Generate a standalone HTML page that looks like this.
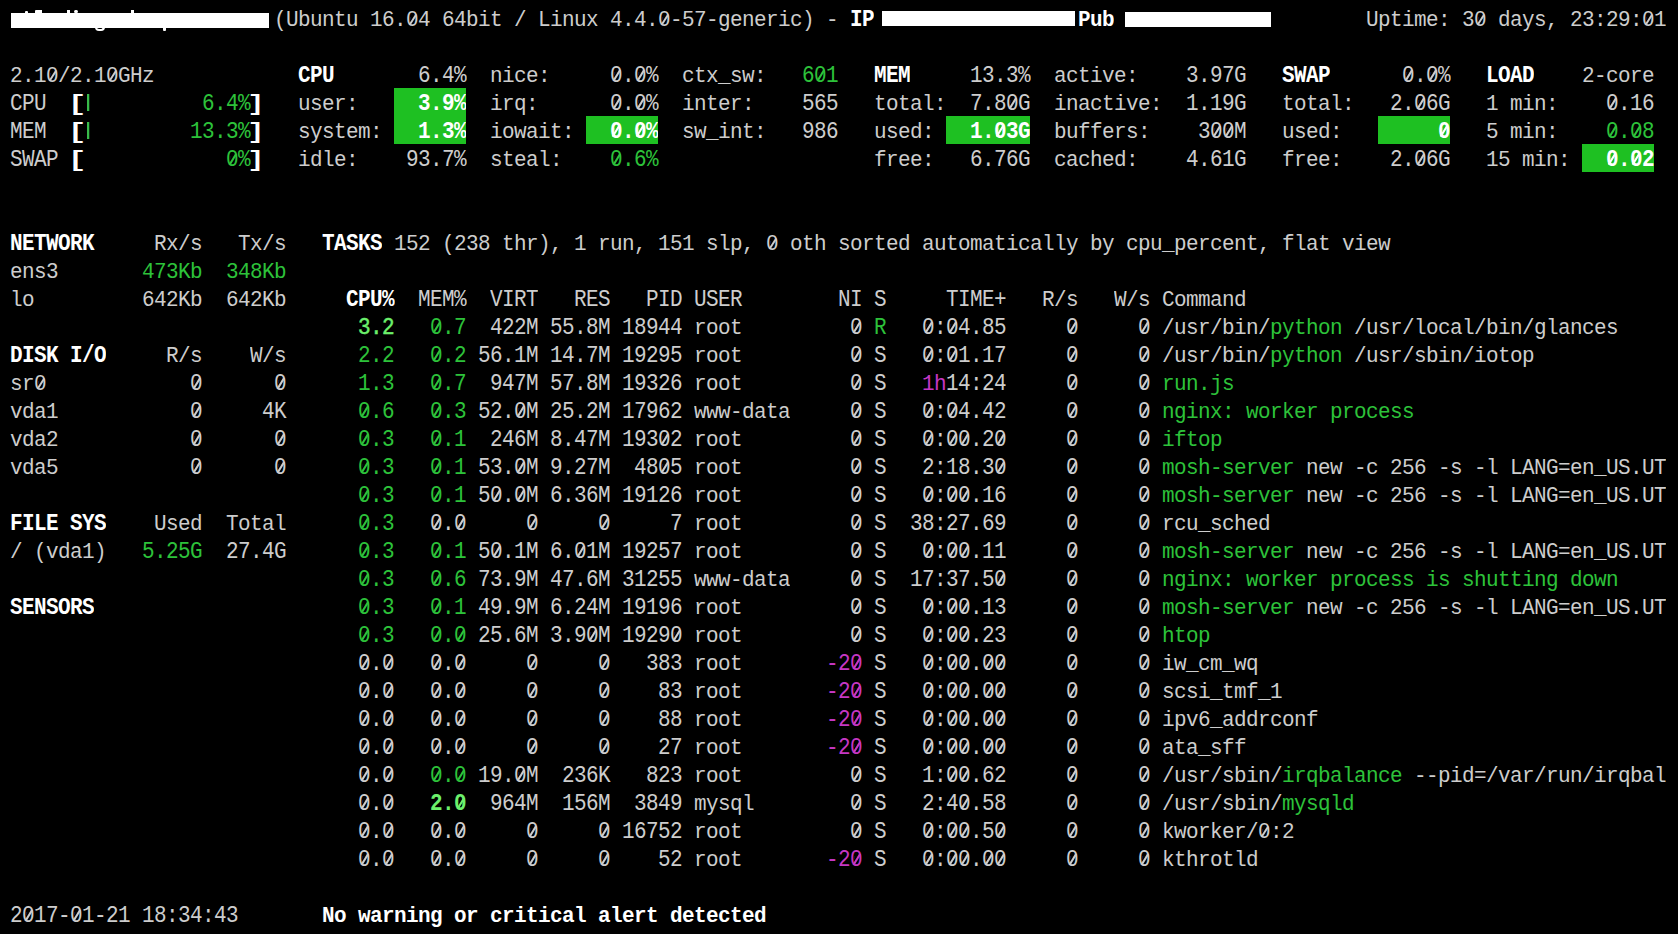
<!DOCTYPE html>
<html><head><meta charset="utf-8"><style>
html,body{margin:0;padding:0;background:#000;}
body{width:1678px;height:934px;position:relative;overflow:hidden;}
span{position:absolute;white-space:pre;font-family:"Liberation Mono",monospace;font-size:21px;letter-spacing:-0.6021px;line-height:28px;height:28px;color:#cdcdcd;transform:scaleY(1.05);transform-origin:0 19.58px;}
.b{color:#fff;font-weight:bold;}
.wl,.wr{color:#fff;font-weight:bold;}
.wl{transform:translateX(1.1px) scale(1.49,1.05);transform-origin:6.91px 19.58px;}
.wr{transform:translateX(-0.5px) scale(1.375,1.05);transform-origin:5.69px 19.58px;}
.bar{position:absolute;width:2px;height:17px;background:#38bb4a;box-shadow:0.6px 0 0 rgba(56,187,74,0.45);}
.g{color:#2dc23a;}
.G{color:#6cf06c;font-weight:bold;}
.H{color:#6cf06c;-webkit-text-stroke:0.4px #6cf06c;}
.d{color:#2dc23a;}
.m{color:#c637c4;}
.x{color:#fff;font-weight:bold;}
.bx{position:absolute;height:28px;background:#1ec022;}
.rd{position:absolute;background:#fff;}
i{font-style:normal;position:relative;}
i::before{content:"";position:absolute;left:4.5px;top:8.2px;width:3.5px;height:4.4px;background:#000;}
.x i::before{background:#1ec022;}
i::after{content:"";position:absolute;left:5.5px;top:4.8px;width:1.6px;height:11.6px;background:currentColor;transform:rotate(34deg);}
.x i::after{width:2.2px;left:5.199999999999999px;}
</style></head><body>
<div class="bx" style="left:394px;top:88px;width:72px"></div>
<div class="bx" style="left:394px;top:116px;width:72px"></div>
<div class="bx" style="left:586px;top:116px;width:72px"></div>
<div class="bx" style="left:946px;top:116px;width:84px"></div>
<div class="bx" style="left:1378px;top:116px;width:72px"></div>
<div class="bx" style="left:1582px;top:144px;width:72px"></div>
<span class="n" style="left:274px;top:6.8px">(Ubuntu 16.<i>0</i>4 64bit / Linux 4.4.<i>0</i>-57-generic) - </span>
<span class="b" style="left:850px;top:6.8px;transform:scaleY(1.1)">IP</span>
<span class="b" style="left:1078px;top:6.8px">Pub</span>
<span class="n" style="left:1366px;top:6.8px">Uptime: 3<i>0</i> days, 23:29:<i>0</i>1</span>
<span class="n" style="left:10px;top:62.8px">2.1<i>0</i>/2.1<i>0</i>GHz</span>
<span class="b" style="left:298px;top:62.8px;transform:scaleY(1.1)">CPU</span>
<span class="n" style="left:418px;top:62.8px;transform:scaleY(1.1)">6.4%</span>
<span class="n" style="left:490px;top:62.8px">nice:</span>
<span class="n" style="left:610px;top:62.8px;transform:scaleY(1.1)"><i>0</i>.<i>0</i>%</span>
<span class="n" style="left:682px;top:62.8px">ctx_sw:</span>
<span class="g" style="left:802px;top:62.8px;transform:scaleY(1.1)">6<i>0</i>1</span>
<span class="b" style="left:874px;top:62.8px;transform:scaleY(1.1)">MEM</span>
<span class="n" style="left:970px;top:62.8px;transform:scaleY(1.1)">13.3%</span>
<span class="n" style="left:1054px;top:62.8px">active:</span>
<span class="n" style="left:1186px;top:62.8px;transform:scaleY(1.1)">3.97G</span>
<span class="b" style="left:1282px;top:62.8px;transform:scaleY(1.1)">SWAP</span>
<span class="n" style="left:1402px;top:62.8px;transform:scaleY(1.1)"><i>0</i>.<i>0</i>%</span>
<span class="b" style="left:1486px;top:62.8px;transform:scaleY(1.1)">LOAD</span>
<span class="n" style="left:1582px;top:62.8px">2-core</span>
<span class="n" style="left:10px;top:90.8px;transform:scaleY(1.1)">CPU</span>
<span class="wl" style="left:70px;top:90.8px">[</span>
<span class="g" style="left:202px;top:90.8px;transform:scaleY(1.1)">6.4%</span>
<span class="wr" style="left:250px;top:90.8px">]</span>
<span class="n" style="left:298px;top:90.8px">user:</span>
<span class="x" style="left:418px;top:90.8px;width:48px;overflow:hidden;transform:scaleY(1.1)">3.9%</span>
<span class="n" style="left:490px;top:90.8px">irq:</span>
<span class="n" style="left:610px;top:90.8px;transform:scaleY(1.1)"><i>0</i>.<i>0</i>%</span>
<span class="n" style="left:682px;top:90.8px">inter:</span>
<span class="n" style="left:802px;top:90.8px;transform:scaleY(1.1)">565</span>
<span class="n" style="left:874px;top:90.8px">total:</span>
<span class="n" style="left:970px;top:90.8px;transform:scaleY(1.1)">7.8<i>0</i>G</span>
<span class="n" style="left:1054px;top:90.8px">inactive:</span>
<span class="n" style="left:1186px;top:90.8px;transform:scaleY(1.1)">1.19G</span>
<span class="n" style="left:1282px;top:90.8px">total:</span>
<span class="n" style="left:1390px;top:90.8px;transform:scaleY(1.1)">2.<i>0</i>6G</span>
<span class="n" style="left:1486px;top:90.8px">1 min:</span>
<span class="n" style="left:1606px;top:90.8px;transform:scaleY(1.1)"><i>0</i>.16</span>
<span class="n" style="left:10px;top:118.8px;transform:scaleY(1.1)">MEM</span>
<span class="wl" style="left:70px;top:118.8px">[</span>
<span class="g" style="left:190px;top:118.8px;transform:scaleY(1.1)">13.3%</span>
<span class="wr" style="left:250px;top:118.8px">]</span>
<span class="n" style="left:298px;top:118.8px">system:</span>
<span class="x" style="left:418px;top:118.8px;width:48px;overflow:hidden;transform:scaleY(1.1)">1.3%</span>
<span class="n" style="left:490px;top:118.8px">iowait:</span>
<span class="x" style="left:610px;top:118.8px;width:48px;overflow:hidden;transform:scaleY(1.1)"><i>0</i>.<i>0</i>%</span>
<span class="n" style="left:682px;top:118.8px">sw_int:</span>
<span class="n" style="left:802px;top:118.8px;transform:scaleY(1.1)">986</span>
<span class="n" style="left:874px;top:118.8px">used:</span>
<span class="x" style="left:970px;top:118.8px;width:60px;overflow:hidden;transform:scaleY(1.1)">1.<i>0</i>3G</span>
<span class="n" style="left:1054px;top:118.8px">buffers:</span>
<span class="n" style="left:1198px;top:118.8px;transform:scaleY(1.1)">3<i>0</i><i>0</i>M</span>
<span class="n" style="left:1282px;top:118.8px">used:</span>
<span class="x" style="left:1438px;top:118.8px;width:12px;overflow:hidden;transform:scaleY(1.1)"><i>0</i></span>
<span class="n" style="left:1486px;top:118.8px">5 min:</span>
<span class="g" style="left:1606px;top:118.8px;transform:scaleY(1.1)"><i>0</i>.<i>0</i>8</span>
<span class="n" style="left:10px;top:146.8px;transform:scaleY(1.1)">SWAP</span>
<span class="wl" style="left:70px;top:146.8px">[</span>
<span class="g" style="left:226px;top:146.8px;transform:scaleY(1.1)"><i>0</i>%</span>
<span class="wr" style="left:250px;top:146.8px">]</span>
<span class="n" style="left:298px;top:146.8px">idle:</span>
<span class="n" style="left:406px;top:146.8px;transform:scaleY(1.1)">93.7%</span>
<span class="n" style="left:490px;top:146.8px">steal:</span>
<span class="g" style="left:610px;top:146.8px;transform:scaleY(1.1)"><i>0</i>.6%</span>
<span class="n" style="left:874px;top:146.8px">free:</span>
<span class="n" style="left:970px;top:146.8px;transform:scaleY(1.1)">6.76G</span>
<span class="n" style="left:1054px;top:146.8px">cached:</span>
<span class="n" style="left:1186px;top:146.8px;transform:scaleY(1.1)">4.61G</span>
<span class="n" style="left:1282px;top:146.8px">free:</span>
<span class="n" style="left:1390px;top:146.8px;transform:scaleY(1.1)">2.<i>0</i>6G</span>
<span class="n" style="left:1486px;top:146.8px">15 min:</span>
<span class="x" style="left:1606px;top:146.8px;width:48px;overflow:hidden;transform:scaleY(1.1)"><i>0</i>.<i>0</i>2</span>
<span class="b" style="left:10px;top:230.8px;transform:scaleY(1.1)">NETWORK</span>
<span class="n" style="left:154px;top:230.8px">Rx/s</span>
<span class="n" style="left:238px;top:230.8px">Tx/s</span>
<span class="b" style="left:322px;top:230.8px;transform:scaleY(1.1)">TASKS</span>
<span class="n" style="left:394px;top:230.8px">152 (238 thr), 1 run, 151 slp, <i>0</i> oth sorted automatically by cpu_percent, flat view</span>
<span class="n" style="left:10px;top:258.8px">ens3</span>
<span class="g" style="left:142px;top:258.8px">473Kb</span>
<span class="g" style="left:226px;top:258.8px">348Kb</span>
<span class="n" style="left:10px;top:286.8px">lo</span>
<span class="n" style="left:142px;top:286.8px">642Kb</span>
<span class="n" style="left:226px;top:286.8px">642Kb</span>
<span class="b" style="left:346px;top:286.8px;transform:scaleY(1.1)">CPU%</span>
<span class="n" style="left:418px;top:286.8px;transform:scaleY(1.1)">MEM%</span>
<span class="n" style="left:490px;top:286.8px;transform:scaleY(1.1)">VIRT</span>
<span class="n" style="left:574px;top:286.8px;transform:scaleY(1.1)">RES</span>
<span class="n" style="left:646px;top:286.8px;transform:scaleY(1.1)">PID</span>
<span class="n" style="left:694px;top:286.8px;transform:scaleY(1.1)">USER</span>
<span class="n" style="left:838px;top:286.8px;transform:scaleY(1.1)">NI</span>
<span class="n" style="left:874px;top:286.8px;transform:scaleY(1.1)">S</span>
<span class="n" style="left:946px;top:286.8px;transform:scaleY(1.1)">TIME+</span>
<span class="n" style="left:1042px;top:286.8px">R/s</span>
<span class="n" style="left:1114px;top:286.8px">W/s</span>
<span class="n" style="left:1162px;top:286.8px">Command</span>
<span class="H" style="left:358px;top:314.8px;transform:scaleY(1.1)">3.2</span>
<span class="g" style="left:430px;top:314.8px;transform:scaleY(1.1)"><i>0</i>.7</span>
<span class="n" style="left:490px;top:314.8px;transform:scaleY(1.1)">422M</span>
<span class="n" style="left:550px;top:314.8px;transform:scaleY(1.1)">55.8M</span>
<span class="n" style="left:622px;top:314.8px;transform:scaleY(1.1)">18944</span>
<span class="n" style="left:694px;top:314.8px">root</span>
<span class="n" style="left:850px;top:314.8px;transform:scaleY(1.1)"><i>0</i></span>
<span class="g" style="left:874px;top:314.8px;transform:scaleY(1.1)">R</span>
<span class="n" style="left:922px;top:314.8px;transform:scaleY(1.1)"><i>0</i>:<i>0</i>4.85</span>
<span class="n" style="left:1066px;top:314.8px;transform:scaleY(1.1)"><i>0</i></span>
<span class="n" style="left:1138px;top:314.8px;transform:scaleY(1.1)"><i>0</i></span>
<span class="n" style="left:1162px;top:314.8px">/usr/bin/</span>
<span class="g" style="left:1270px;top:314.8px">python</span>
<span class="n" style="left:1342px;top:314.8px"> /usr/local/bin/glances</span>
<span class="b" style="left:10px;top:342.8px;transform:scaleY(1.1)">DISK I/O</span>
<span class="n" style="left:166px;top:342.8px">R/s</span>
<span class="n" style="left:250px;top:342.8px">W/s</span>
<span class="g" style="left:358px;top:342.8px;transform:scaleY(1.1)">2.2</span>
<span class="g" style="left:430px;top:342.8px;transform:scaleY(1.1)"><i>0</i>.2</span>
<span class="n" style="left:478px;top:342.8px;transform:scaleY(1.1)">56.1M</span>
<span class="n" style="left:550px;top:342.8px;transform:scaleY(1.1)">14.7M</span>
<span class="n" style="left:622px;top:342.8px;transform:scaleY(1.1)">19295</span>
<span class="n" style="left:694px;top:342.8px">root</span>
<span class="n" style="left:850px;top:342.8px;transform:scaleY(1.1)"><i>0</i></span>
<span class="n" style="left:874px;top:342.8px;transform:scaleY(1.1)">S</span>
<span class="n" style="left:922px;top:342.8px;transform:scaleY(1.1)"><i>0</i>:<i>0</i>1.17</span>
<span class="n" style="left:1066px;top:342.8px;transform:scaleY(1.1)"><i>0</i></span>
<span class="n" style="left:1138px;top:342.8px;transform:scaleY(1.1)"><i>0</i></span>
<span class="n" style="left:1162px;top:342.8px">/usr/bin/</span>
<span class="g" style="left:1270px;top:342.8px">python</span>
<span class="n" style="left:1342px;top:342.8px"> /usr/sbin/iotop</span>
<span class="n" style="left:10px;top:370.8px">sr<i>0</i></span>
<span class="n" style="left:190px;top:370.8px;transform:scaleY(1.1)"><i>0</i></span>
<span class="n" style="left:274px;top:370.8px;transform:scaleY(1.1)"><i>0</i></span>
<span class="g" style="left:358px;top:370.8px;transform:scaleY(1.1)">1.3</span>
<span class="g" style="left:430px;top:370.8px;transform:scaleY(1.1)"><i>0</i>.7</span>
<span class="n" style="left:490px;top:370.8px;transform:scaleY(1.1)">947M</span>
<span class="n" style="left:550px;top:370.8px;transform:scaleY(1.1)">57.8M</span>
<span class="n" style="left:622px;top:370.8px;transform:scaleY(1.1)">19326</span>
<span class="n" style="left:694px;top:370.8px">root</span>
<span class="n" style="left:850px;top:370.8px;transform:scaleY(1.1)"><i>0</i></span>
<span class="n" style="left:874px;top:370.8px;transform:scaleY(1.1)">S</span>
<span class="m" style="left:922px;top:370.8px">1h</span>
<span class="n" style="left:946px;top:370.8px;transform:scaleY(1.1)">14:24</span>
<span class="n" style="left:1066px;top:370.8px;transform:scaleY(1.1)"><i>0</i></span>
<span class="n" style="left:1138px;top:370.8px;transform:scaleY(1.1)"><i>0</i></span>
<span class="g" style="left:1162px;top:370.8px">run.js</span>
<span class="n" style="left:10px;top:398.8px">vda1</span>
<span class="n" style="left:190px;top:398.8px;transform:scaleY(1.1)"><i>0</i></span>
<span class="n" style="left:262px;top:398.8px;transform:scaleY(1.1)">4K</span>
<span class="g" style="left:358px;top:398.8px;transform:scaleY(1.1)"><i>0</i>.6</span>
<span class="g" style="left:430px;top:398.8px;transform:scaleY(1.1)"><i>0</i>.3</span>
<span class="n" style="left:478px;top:398.8px;transform:scaleY(1.1)">52.<i>0</i>M</span>
<span class="n" style="left:550px;top:398.8px;transform:scaleY(1.1)">25.2M</span>
<span class="n" style="left:622px;top:398.8px;transform:scaleY(1.1)">17962</span>
<span class="n" style="left:694px;top:398.8px">www-data</span>
<span class="n" style="left:850px;top:398.8px;transform:scaleY(1.1)"><i>0</i></span>
<span class="n" style="left:874px;top:398.8px;transform:scaleY(1.1)">S</span>
<span class="n" style="left:922px;top:398.8px;transform:scaleY(1.1)"><i>0</i>:<i>0</i>4.42</span>
<span class="n" style="left:1066px;top:398.8px;transform:scaleY(1.1)"><i>0</i></span>
<span class="n" style="left:1138px;top:398.8px;transform:scaleY(1.1)"><i>0</i></span>
<span class="g" style="left:1162px;top:398.8px">nginx: worker process</span>
<span class="n" style="left:10px;top:426.8px">vda2</span>
<span class="n" style="left:190px;top:426.8px;transform:scaleY(1.1)"><i>0</i></span>
<span class="n" style="left:274px;top:426.8px;transform:scaleY(1.1)"><i>0</i></span>
<span class="g" style="left:358px;top:426.8px;transform:scaleY(1.1)"><i>0</i>.3</span>
<span class="g" style="left:430px;top:426.8px;transform:scaleY(1.1)"><i>0</i>.1</span>
<span class="n" style="left:490px;top:426.8px;transform:scaleY(1.1)">246M</span>
<span class="n" style="left:550px;top:426.8px;transform:scaleY(1.1)">8.47M</span>
<span class="n" style="left:622px;top:426.8px;transform:scaleY(1.1)">193<i>0</i>2</span>
<span class="n" style="left:694px;top:426.8px">root</span>
<span class="n" style="left:850px;top:426.8px;transform:scaleY(1.1)"><i>0</i></span>
<span class="n" style="left:874px;top:426.8px;transform:scaleY(1.1)">S</span>
<span class="n" style="left:922px;top:426.8px;transform:scaleY(1.1)"><i>0</i>:<i>0</i><i>0</i>.2<i>0</i></span>
<span class="n" style="left:1066px;top:426.8px;transform:scaleY(1.1)"><i>0</i></span>
<span class="n" style="left:1138px;top:426.8px;transform:scaleY(1.1)"><i>0</i></span>
<span class="g" style="left:1162px;top:426.8px">iftop</span>
<span class="n" style="left:10px;top:454.8px">vda5</span>
<span class="n" style="left:190px;top:454.8px;transform:scaleY(1.1)"><i>0</i></span>
<span class="n" style="left:274px;top:454.8px;transform:scaleY(1.1)"><i>0</i></span>
<span class="g" style="left:358px;top:454.8px;transform:scaleY(1.1)"><i>0</i>.3</span>
<span class="g" style="left:430px;top:454.8px;transform:scaleY(1.1)"><i>0</i>.1</span>
<span class="n" style="left:478px;top:454.8px;transform:scaleY(1.1)">53.<i>0</i>M</span>
<span class="n" style="left:550px;top:454.8px;transform:scaleY(1.1)">9.27M</span>
<span class="n" style="left:634px;top:454.8px;transform:scaleY(1.1)">48<i>0</i>5</span>
<span class="n" style="left:694px;top:454.8px">root</span>
<span class="n" style="left:850px;top:454.8px;transform:scaleY(1.1)"><i>0</i></span>
<span class="n" style="left:874px;top:454.8px;transform:scaleY(1.1)">S</span>
<span class="n" style="left:922px;top:454.8px;transform:scaleY(1.1)">2:18.3<i>0</i></span>
<span class="n" style="left:1066px;top:454.8px;transform:scaleY(1.1)"><i>0</i></span>
<span class="n" style="left:1138px;top:454.8px;transform:scaleY(1.1)"><i>0</i></span>
<span class="g" style="left:1162px;top:454.8px">mosh-server</span>
<span class="n" style="left:1294px;top:454.8px"> new -c 256 -s -l LANG=en_US.UT</span>
<span class="g" style="left:358px;top:482.8px;transform:scaleY(1.1)"><i>0</i>.3</span>
<span class="g" style="left:430px;top:482.8px;transform:scaleY(1.1)"><i>0</i>.1</span>
<span class="n" style="left:478px;top:482.8px;transform:scaleY(1.1)">5<i>0</i>.<i>0</i>M</span>
<span class="n" style="left:550px;top:482.8px;transform:scaleY(1.1)">6.36M</span>
<span class="n" style="left:622px;top:482.8px;transform:scaleY(1.1)">19126</span>
<span class="n" style="left:694px;top:482.8px">root</span>
<span class="n" style="left:850px;top:482.8px;transform:scaleY(1.1)"><i>0</i></span>
<span class="n" style="left:874px;top:482.8px;transform:scaleY(1.1)">S</span>
<span class="n" style="left:922px;top:482.8px;transform:scaleY(1.1)"><i>0</i>:<i>0</i><i>0</i>.16</span>
<span class="n" style="left:1066px;top:482.8px;transform:scaleY(1.1)"><i>0</i></span>
<span class="n" style="left:1138px;top:482.8px;transform:scaleY(1.1)"><i>0</i></span>
<span class="g" style="left:1162px;top:482.8px">mosh-server</span>
<span class="n" style="left:1294px;top:482.8px"> new -c 256 -s -l LANG=en_US.UT</span>
<span class="b" style="left:10px;top:510.8px;transform:scaleY(1.1)">FILE SYS</span>
<span class="n" style="left:154px;top:510.8px">Used</span>
<span class="n" style="left:226px;top:510.8px">Total</span>
<span class="g" style="left:358px;top:510.8px;transform:scaleY(1.1)"><i>0</i>.3</span>
<span class="n" style="left:430px;top:510.8px;transform:scaleY(1.1)"><i>0</i>.<i>0</i></span>
<span class="n" style="left:526px;top:510.8px;transform:scaleY(1.1)"><i>0</i></span>
<span class="n" style="left:598px;top:510.8px;transform:scaleY(1.1)"><i>0</i></span>
<span class="n" style="left:670px;top:510.8px;transform:scaleY(1.1)">7</span>
<span class="n" style="left:694px;top:510.8px">root</span>
<span class="n" style="left:850px;top:510.8px;transform:scaleY(1.1)"><i>0</i></span>
<span class="n" style="left:874px;top:510.8px;transform:scaleY(1.1)">S</span>
<span class="n" style="left:910px;top:510.8px;transform:scaleY(1.1)">38:27.69</span>
<span class="n" style="left:1066px;top:510.8px;transform:scaleY(1.1)"><i>0</i></span>
<span class="n" style="left:1138px;top:510.8px;transform:scaleY(1.1)"><i>0</i></span>
<span class="n" style="left:1162px;top:510.8px">rcu_sched</span>
<span class="n" style="left:10px;top:538.8px">/ (vda1)</span>
<span class="g" style="left:142px;top:538.8px;transform:scaleY(1.1)">5.25G</span>
<span class="n" style="left:226px;top:538.8px;transform:scaleY(1.1)">27.4G</span>
<span class="g" style="left:358px;top:538.8px;transform:scaleY(1.1)"><i>0</i>.3</span>
<span class="g" style="left:430px;top:538.8px;transform:scaleY(1.1)"><i>0</i>.1</span>
<span class="n" style="left:478px;top:538.8px;transform:scaleY(1.1)">5<i>0</i>.1M</span>
<span class="n" style="left:550px;top:538.8px;transform:scaleY(1.1)">6.<i>0</i>1M</span>
<span class="n" style="left:622px;top:538.8px;transform:scaleY(1.1)">19257</span>
<span class="n" style="left:694px;top:538.8px">root</span>
<span class="n" style="left:850px;top:538.8px;transform:scaleY(1.1)"><i>0</i></span>
<span class="n" style="left:874px;top:538.8px;transform:scaleY(1.1)">S</span>
<span class="n" style="left:922px;top:538.8px;transform:scaleY(1.1)"><i>0</i>:<i>0</i><i>0</i>.11</span>
<span class="n" style="left:1066px;top:538.8px;transform:scaleY(1.1)"><i>0</i></span>
<span class="n" style="left:1138px;top:538.8px;transform:scaleY(1.1)"><i>0</i></span>
<span class="g" style="left:1162px;top:538.8px">mosh-server</span>
<span class="n" style="left:1294px;top:538.8px"> new -c 256 -s -l LANG=en_US.UT</span>
<span class="g" style="left:358px;top:566.8px;transform:scaleY(1.1)"><i>0</i>.3</span>
<span class="g" style="left:430px;top:566.8px;transform:scaleY(1.1)"><i>0</i>.6</span>
<span class="n" style="left:478px;top:566.8px;transform:scaleY(1.1)">73.9M</span>
<span class="n" style="left:550px;top:566.8px;transform:scaleY(1.1)">47.6M</span>
<span class="n" style="left:622px;top:566.8px;transform:scaleY(1.1)">31255</span>
<span class="n" style="left:694px;top:566.8px">www-data</span>
<span class="n" style="left:850px;top:566.8px;transform:scaleY(1.1)"><i>0</i></span>
<span class="n" style="left:874px;top:566.8px;transform:scaleY(1.1)">S</span>
<span class="n" style="left:910px;top:566.8px;transform:scaleY(1.1)">17:37.5<i>0</i></span>
<span class="n" style="left:1066px;top:566.8px;transform:scaleY(1.1)"><i>0</i></span>
<span class="n" style="left:1138px;top:566.8px;transform:scaleY(1.1)"><i>0</i></span>
<span class="g" style="left:1162px;top:566.8px">nginx: worker process is shutting down</span>
<span class="b" style="left:10px;top:594.8px;transform:scaleY(1.1)">SENSORS</span>
<span class="g" style="left:358px;top:594.8px;transform:scaleY(1.1)"><i>0</i>.3</span>
<span class="g" style="left:430px;top:594.8px;transform:scaleY(1.1)"><i>0</i>.1</span>
<span class="n" style="left:478px;top:594.8px;transform:scaleY(1.1)">49.9M</span>
<span class="n" style="left:550px;top:594.8px;transform:scaleY(1.1)">6.24M</span>
<span class="n" style="left:622px;top:594.8px;transform:scaleY(1.1)">19196</span>
<span class="n" style="left:694px;top:594.8px">root</span>
<span class="n" style="left:850px;top:594.8px;transform:scaleY(1.1)"><i>0</i></span>
<span class="n" style="left:874px;top:594.8px;transform:scaleY(1.1)">S</span>
<span class="n" style="left:922px;top:594.8px;transform:scaleY(1.1)"><i>0</i>:<i>0</i><i>0</i>.13</span>
<span class="n" style="left:1066px;top:594.8px;transform:scaleY(1.1)"><i>0</i></span>
<span class="n" style="left:1138px;top:594.8px;transform:scaleY(1.1)"><i>0</i></span>
<span class="g" style="left:1162px;top:594.8px">mosh-server</span>
<span class="n" style="left:1294px;top:594.8px"> new -c 256 -s -l LANG=en_US.UT</span>
<span class="g" style="left:358px;top:622.8px;transform:scaleY(1.1)"><i>0</i>.3</span>
<span class="g" style="left:430px;top:622.8px;transform:scaleY(1.1)"><i>0</i>.<i>0</i></span>
<span class="n" style="left:478px;top:622.8px;transform:scaleY(1.1)">25.6M</span>
<span class="n" style="left:550px;top:622.8px;transform:scaleY(1.1)">3.9<i>0</i>M</span>
<span class="n" style="left:622px;top:622.8px;transform:scaleY(1.1)">1929<i>0</i></span>
<span class="n" style="left:694px;top:622.8px">root</span>
<span class="n" style="left:850px;top:622.8px;transform:scaleY(1.1)"><i>0</i></span>
<span class="n" style="left:874px;top:622.8px;transform:scaleY(1.1)">S</span>
<span class="n" style="left:922px;top:622.8px;transform:scaleY(1.1)"><i>0</i>:<i>0</i><i>0</i>.23</span>
<span class="n" style="left:1066px;top:622.8px;transform:scaleY(1.1)"><i>0</i></span>
<span class="n" style="left:1138px;top:622.8px;transform:scaleY(1.1)"><i>0</i></span>
<span class="g" style="left:1162px;top:622.8px">htop</span>
<span class="n" style="left:358px;top:650.8px;transform:scaleY(1.1)"><i>0</i>.<i>0</i></span>
<span class="n" style="left:430px;top:650.8px;transform:scaleY(1.1)"><i>0</i>.<i>0</i></span>
<span class="n" style="left:526px;top:650.8px;transform:scaleY(1.1)"><i>0</i></span>
<span class="n" style="left:598px;top:650.8px;transform:scaleY(1.1)"><i>0</i></span>
<span class="n" style="left:646px;top:650.8px;transform:scaleY(1.1)">383</span>
<span class="n" style="left:694px;top:650.8px">root</span>
<span class="m" style="left:826px;top:650.8px;transform:scaleY(1.1)">-2<i>0</i></span>
<span class="n" style="left:874px;top:650.8px;transform:scaleY(1.1)">S</span>
<span class="n" style="left:922px;top:650.8px;transform:scaleY(1.1)"><i>0</i>:<i>0</i><i>0</i>.<i>0</i><i>0</i></span>
<span class="n" style="left:1066px;top:650.8px;transform:scaleY(1.1)"><i>0</i></span>
<span class="n" style="left:1138px;top:650.8px;transform:scaleY(1.1)"><i>0</i></span>
<span class="n" style="left:1162px;top:650.8px">iw_cm_wq</span>
<span class="n" style="left:358px;top:678.8px;transform:scaleY(1.1)"><i>0</i>.<i>0</i></span>
<span class="n" style="left:430px;top:678.8px;transform:scaleY(1.1)"><i>0</i>.<i>0</i></span>
<span class="n" style="left:526px;top:678.8px;transform:scaleY(1.1)"><i>0</i></span>
<span class="n" style="left:598px;top:678.8px;transform:scaleY(1.1)"><i>0</i></span>
<span class="n" style="left:658px;top:678.8px;transform:scaleY(1.1)">83</span>
<span class="n" style="left:694px;top:678.8px">root</span>
<span class="m" style="left:826px;top:678.8px;transform:scaleY(1.1)">-2<i>0</i></span>
<span class="n" style="left:874px;top:678.8px;transform:scaleY(1.1)">S</span>
<span class="n" style="left:922px;top:678.8px;transform:scaleY(1.1)"><i>0</i>:<i>0</i><i>0</i>.<i>0</i><i>0</i></span>
<span class="n" style="left:1066px;top:678.8px;transform:scaleY(1.1)"><i>0</i></span>
<span class="n" style="left:1138px;top:678.8px;transform:scaleY(1.1)"><i>0</i></span>
<span class="n" style="left:1162px;top:678.8px">scsi_tmf_1</span>
<span class="n" style="left:358px;top:706.8px;transform:scaleY(1.1)"><i>0</i>.<i>0</i></span>
<span class="n" style="left:430px;top:706.8px;transform:scaleY(1.1)"><i>0</i>.<i>0</i></span>
<span class="n" style="left:526px;top:706.8px;transform:scaleY(1.1)"><i>0</i></span>
<span class="n" style="left:598px;top:706.8px;transform:scaleY(1.1)"><i>0</i></span>
<span class="n" style="left:658px;top:706.8px;transform:scaleY(1.1)">88</span>
<span class="n" style="left:694px;top:706.8px">root</span>
<span class="m" style="left:826px;top:706.8px;transform:scaleY(1.1)">-2<i>0</i></span>
<span class="n" style="left:874px;top:706.8px;transform:scaleY(1.1)">S</span>
<span class="n" style="left:922px;top:706.8px;transform:scaleY(1.1)"><i>0</i>:<i>0</i><i>0</i>.<i>0</i><i>0</i></span>
<span class="n" style="left:1066px;top:706.8px;transform:scaleY(1.1)"><i>0</i></span>
<span class="n" style="left:1138px;top:706.8px;transform:scaleY(1.1)"><i>0</i></span>
<span class="n" style="left:1162px;top:706.8px">ipv6_addrconf</span>
<span class="n" style="left:358px;top:734.8px;transform:scaleY(1.1)"><i>0</i>.<i>0</i></span>
<span class="n" style="left:430px;top:734.8px;transform:scaleY(1.1)"><i>0</i>.<i>0</i></span>
<span class="n" style="left:526px;top:734.8px;transform:scaleY(1.1)"><i>0</i></span>
<span class="n" style="left:598px;top:734.8px;transform:scaleY(1.1)"><i>0</i></span>
<span class="n" style="left:658px;top:734.8px;transform:scaleY(1.1)">27</span>
<span class="n" style="left:694px;top:734.8px">root</span>
<span class="m" style="left:826px;top:734.8px;transform:scaleY(1.1)">-2<i>0</i></span>
<span class="n" style="left:874px;top:734.8px;transform:scaleY(1.1)">S</span>
<span class="n" style="left:922px;top:734.8px;transform:scaleY(1.1)"><i>0</i>:<i>0</i><i>0</i>.<i>0</i><i>0</i></span>
<span class="n" style="left:1066px;top:734.8px;transform:scaleY(1.1)"><i>0</i></span>
<span class="n" style="left:1138px;top:734.8px;transform:scaleY(1.1)"><i>0</i></span>
<span class="n" style="left:1162px;top:734.8px">ata_sff</span>
<span class="n" style="left:358px;top:762.8px;transform:scaleY(1.1)"><i>0</i>.<i>0</i></span>
<span class="d" style="left:430px;top:762.8px;transform:scaleY(1.1)"><i>0</i>.<i>0</i></span>
<span class="n" style="left:478px;top:762.8px;transform:scaleY(1.1)">19.<i>0</i>M</span>
<span class="n" style="left:562px;top:762.8px;transform:scaleY(1.1)">236K</span>
<span class="n" style="left:646px;top:762.8px;transform:scaleY(1.1)">823</span>
<span class="n" style="left:694px;top:762.8px">root</span>
<span class="n" style="left:850px;top:762.8px;transform:scaleY(1.1)"><i>0</i></span>
<span class="n" style="left:874px;top:762.8px;transform:scaleY(1.1)">S</span>
<span class="n" style="left:922px;top:762.8px;transform:scaleY(1.1)">1:<i>0</i><i>0</i>.62</span>
<span class="n" style="left:1066px;top:762.8px;transform:scaleY(1.1)"><i>0</i></span>
<span class="n" style="left:1138px;top:762.8px;transform:scaleY(1.1)"><i>0</i></span>
<span class="n" style="left:1162px;top:762.8px">/usr/sbin/</span>
<span class="g" style="left:1282px;top:762.8px">irqbalance</span>
<span class="n" style="left:1402px;top:762.8px"> --pid=/var/run/irqbal</span>
<span class="n" style="left:358px;top:790.8px;transform:scaleY(1.1)"><i>0</i>.<i>0</i></span>
<span class="G" style="left:430px;top:790.8px;transform:scaleY(1.1)">2.<i>0</i></span>
<span class="n" style="left:490px;top:790.8px;transform:scaleY(1.1)">964M</span>
<span class="n" style="left:562px;top:790.8px;transform:scaleY(1.1)">156M</span>
<span class="n" style="left:634px;top:790.8px;transform:scaleY(1.1)">3849</span>
<span class="n" style="left:694px;top:790.8px">mysql</span>
<span class="n" style="left:850px;top:790.8px;transform:scaleY(1.1)"><i>0</i></span>
<span class="n" style="left:874px;top:790.8px;transform:scaleY(1.1)">S</span>
<span class="n" style="left:922px;top:790.8px;transform:scaleY(1.1)">2:4<i>0</i>.58</span>
<span class="n" style="left:1066px;top:790.8px;transform:scaleY(1.1)"><i>0</i></span>
<span class="n" style="left:1138px;top:790.8px;transform:scaleY(1.1)"><i>0</i></span>
<span class="n" style="left:1162px;top:790.8px">/usr/sbin/</span>
<span class="g" style="left:1282px;top:790.8px">mysqld</span>
<span class="n" style="left:358px;top:818.8px;transform:scaleY(1.1)"><i>0</i>.<i>0</i></span>
<span class="n" style="left:430px;top:818.8px;transform:scaleY(1.1)"><i>0</i>.<i>0</i></span>
<span class="n" style="left:526px;top:818.8px;transform:scaleY(1.1)"><i>0</i></span>
<span class="n" style="left:598px;top:818.8px;transform:scaleY(1.1)"><i>0</i></span>
<span class="n" style="left:622px;top:818.8px;transform:scaleY(1.1)">16752</span>
<span class="n" style="left:694px;top:818.8px">root</span>
<span class="n" style="left:850px;top:818.8px;transform:scaleY(1.1)"><i>0</i></span>
<span class="n" style="left:874px;top:818.8px;transform:scaleY(1.1)">S</span>
<span class="n" style="left:922px;top:818.8px;transform:scaleY(1.1)"><i>0</i>:<i>0</i><i>0</i>.5<i>0</i></span>
<span class="n" style="left:1066px;top:818.8px;transform:scaleY(1.1)"><i>0</i></span>
<span class="n" style="left:1138px;top:818.8px;transform:scaleY(1.1)"><i>0</i></span>
<span class="n" style="left:1162px;top:818.8px">kworker/<i>0</i>:2</span>
<span class="n" style="left:358px;top:846.8px;transform:scaleY(1.1)"><i>0</i>.<i>0</i></span>
<span class="n" style="left:430px;top:846.8px;transform:scaleY(1.1)"><i>0</i>.<i>0</i></span>
<span class="n" style="left:526px;top:846.8px;transform:scaleY(1.1)"><i>0</i></span>
<span class="n" style="left:598px;top:846.8px;transform:scaleY(1.1)"><i>0</i></span>
<span class="n" style="left:658px;top:846.8px;transform:scaleY(1.1)">52</span>
<span class="n" style="left:694px;top:846.8px">root</span>
<span class="m" style="left:826px;top:846.8px;transform:scaleY(1.1)">-2<i>0</i></span>
<span class="n" style="left:874px;top:846.8px;transform:scaleY(1.1)">S</span>
<span class="n" style="left:922px;top:846.8px;transform:scaleY(1.1)"><i>0</i>:<i>0</i><i>0</i>.<i>0</i><i>0</i></span>
<span class="n" style="left:1066px;top:846.8px;transform:scaleY(1.1)"><i>0</i></span>
<span class="n" style="left:1138px;top:846.8px;transform:scaleY(1.1)"><i>0</i></span>
<span class="n" style="left:1162px;top:846.8px">kthrotld</span>
<span class="n" style="left:10px;top:902.8px;transform:scaleY(1.1)">2<i>0</i>17-<i>0</i>1-21 18:34:43</span>
<span class="b" style="left:322px;top:902.8px">No warning or critical alert detected</span>
<div class="rd" style="left:25px;top:11px;width:3px;height:2px;border-radius:1px 1px 0 0"></div>
<div class="rd" style="left:35px;top:10px;width:7px;height:3px;border-radius:1px 0 0 0"></div>
<div class="rd" style="left:67px;top:10px;width:3px;height:3px;border-radius:0"></div>
<div class="rd" style="left:74px;top:10px;width:4px;height:3px;border-radius:2px"></div>
<div class="rd" style="left:131px;top:10px;width:3px;height:3px;border-radius:0"></div>
<div class="rd" style="left:163px;top:28px;width:3px;height:3px;border-radius:0 0 1px 1px"></div>
<div style="position:absolute;left:95px;top:27px;width:6px;height:2px;border:2px solid #fff;border-top:none;border-radius:0 0 5px 5px"></div>
<div class="bar" style="left:87px;top:94px"></div>
<div class="bar" style="left:87px;top:122px"></div>
<div class="rd" style="left:11px;top:13px;width:258px;height:15px"></div>
<div class="rd" style="left:882px;top:11px;width:193px;height:15px"></div>
<div class="rd" style="left:1125px;top:12px;width:146px;height:15px"></div>
</body></html>
